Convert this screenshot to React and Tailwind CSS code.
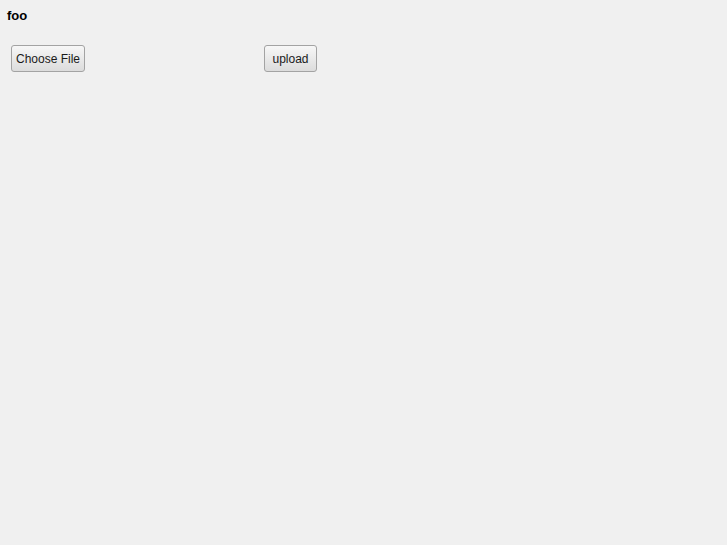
export default function App() {
    return (
        <div className="min-h-[545px] bg-[#f0f0f0] text-black" style={{ fontFamily: '"Liberation Sans", Arial, sans-serif' }}>
            <div className="pl-[7px] pt-[8px] text-[13px] font-bold leading-[15px]">foo</div>
            <div className="flex items-center pl-[11px] pt-[22px]">
                <div className="w-[253px]">
                    <button className="h-[27px] w-[74px] rounded-[3px] border border-[#a3a3a3] bg-gradient-to-b from-[#f7f7f7] to-[#dcdcdc] text-[12px] leading-none text-[#1a1a1a]">
                        Choose File
                    </button>
                </div>
                <button className="h-[27px] w-[53px] rounded-[3px] border border-[#a3a3a3] bg-gradient-to-b from-[#f7f7f7] to-[#dcdcdc] text-[12px] leading-none text-[#1a1a1a]">
                    upload
                </button>
            </div>
        </div>
    );
}
